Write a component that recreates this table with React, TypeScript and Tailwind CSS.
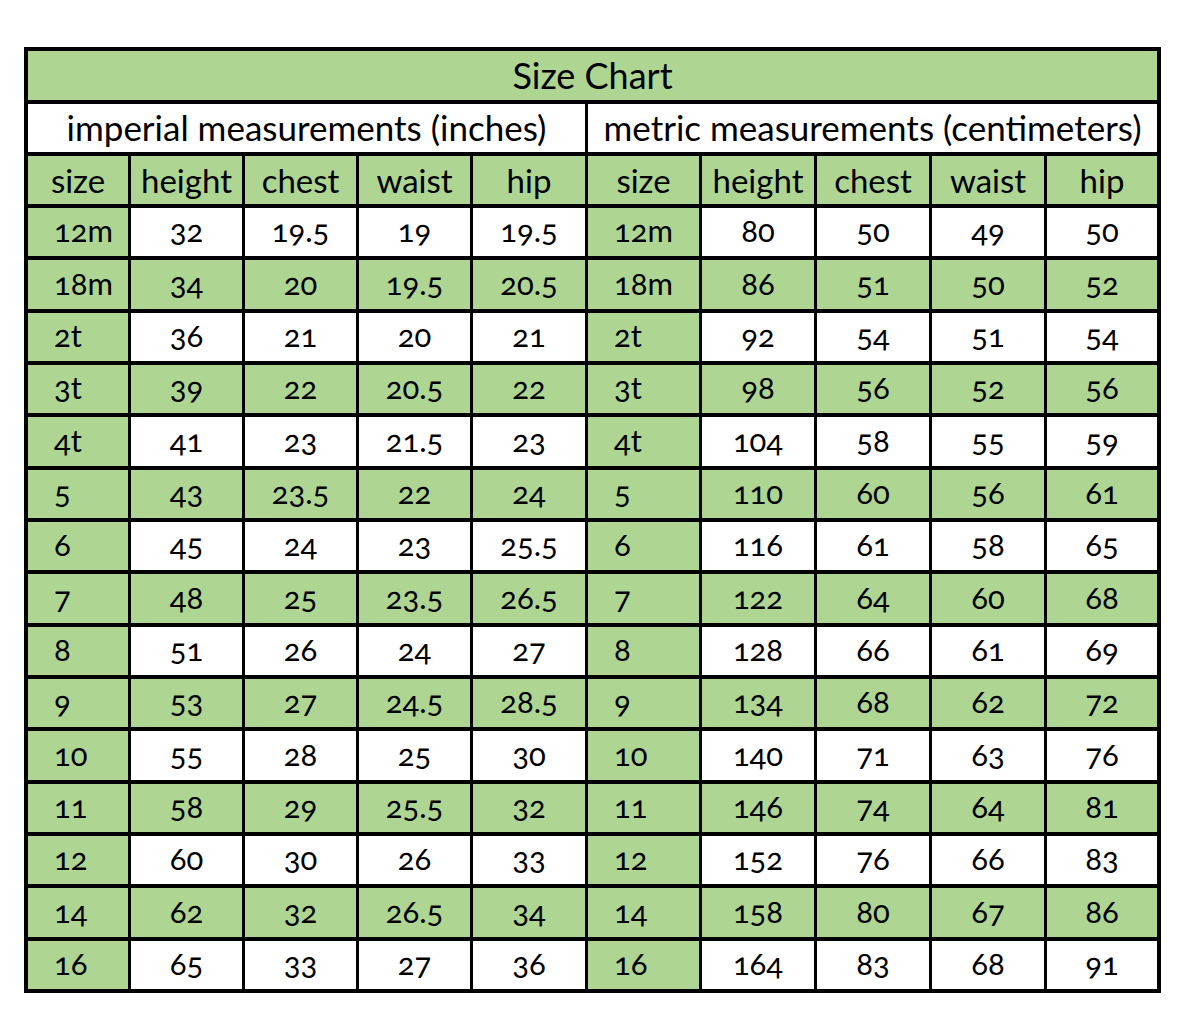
import React from "react";

const rows: string[][] = [
  ["12m", "32", "19.5", "19", "19.5", "12m", "80", "50", "49", "50"],
  ["18m", "34", "20", "19.5", "20.5", "18m", "86", "51", "50", "52"],
  ["2t", "36", "21", "20", "21", "2t", "92", "54", "51", "54"],
  ["3t", "39", "22", "20.5", "22", "3t", "98", "56", "52", "56"],
  ["4t", "41", "23", "21.5", "23", "4t", "104", "58", "55", "59"],
  ["5", "43", "23.5", "22", "24", "5", "110", "60", "56", "61"],
  ["6", "45", "24", "23", "25.5", "6", "116", "61", "58", "65"],
  ["7", "48", "25", "23.5", "26.5", "7", "122", "64", "60", "68"],
  ["8", "51", "26", "24", "27", "8", "128", "66", "61", "69"],
  ["9", "53", "27", "24.5", "28.5", "9", "134", "68", "62", "72"],
  ["10", "55", "28", "25", "30", "10", "140", "71", "63", "76"],
  ["11", "58", "29", "25.5", "32", "11", "146", "74", "64", "81"],
  ["12", "60", "30", "26", "33", "12", "152", "76", "66", "83"],
  ["14", "62", "32", "26.5", "34", "14", "158", "80", "67", "86"],
  ["16", "65", "33", "27", "36", "16", "164", "83", "68", "91"],
];

const headers = ["size", "height", "chest", "waist", "hip", "size", "height", "chest", "waist", "hip"];

export default function App() {
  return (
    <div
      className="min-h-[1014px] w-[1182px] bg-white pt-[47px] pl-[24px] text-black oldstyle-nums"
      style={{ fontFamily: "Lato, 'Open Sans', sans-serif" }}
    >
      <div className="grid w-max border-4 border-black bg-black gap-x-[3px] gap-y-[4px] grid-cols-[100px_111px_111px_111px_112px_111px_112px_112px_112px_110px] grid-rows-[49px_48px_48px_repeat(15,48.33px)]">
        <div className="col-span-10 flex items-end justify-center bg-[#aed592] pb-[7px] text-[36px] leading-none">
          Size Chart
        </div>
        <div className="col-span-5 flex items-end justify-center bg-white pb-[7px] text-[35px] leading-none">
          imperial measurements (inches)
        </div>
        <div className="col-span-5 flex items-end justify-center bg-white pb-[7px] text-[35px] leading-none">
          metric measurements (centimeters)
        </div>
        {headers.map((h, i) => (
          <div
            key={"h" + i}
            className="flex items-end justify-center bg-[#aed592] pb-[7px] text-[33px] leading-none"
          >
            {h}
          </div>
        ))}
        {rows.map((r, ri) =>
          r.map((c, ci) => {
            const isSize = ci === 0 || ci === 5;
            const green = isSize || ri % 2 === 1;
            return (
              <div
                key={ri + "-" + ci}
                className={
                  "flex items-end pb-[10px] text-[31px] leading-none " +
                  (green ? "bg-[#aed592] " : "bg-white ") +
                  (isSize ? "justify-start pl-[26px]" : "justify-center")
                }
              >
                {c}
              </div>
            );
          })
        )}
      </div>
    </div>
  );
}
